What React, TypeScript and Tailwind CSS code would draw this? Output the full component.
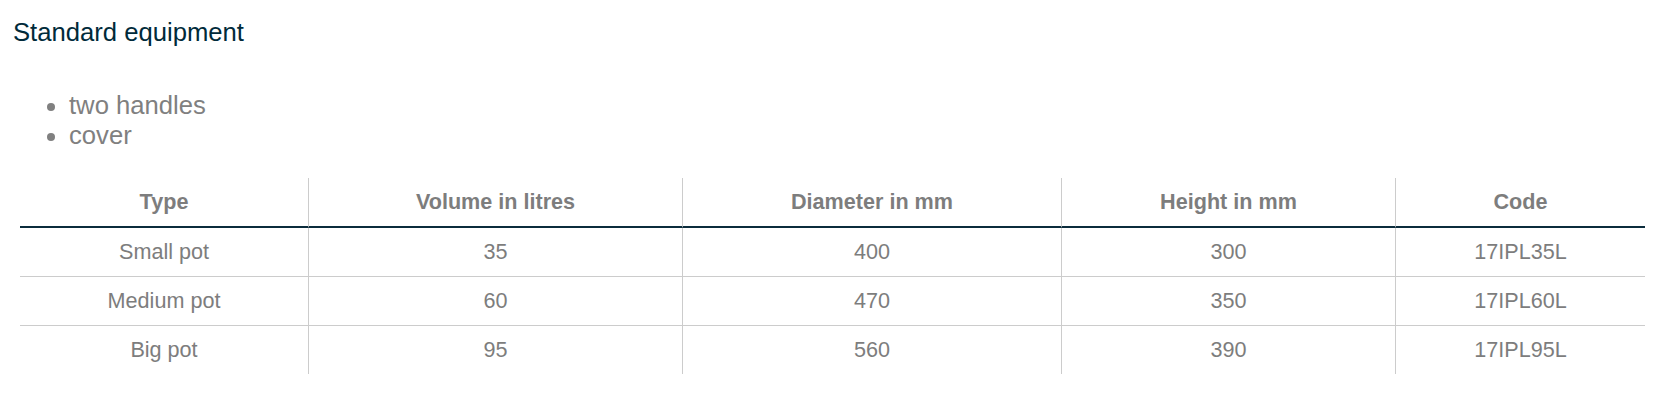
const rows = [
  { type: "Small pot", volume: "35", diameter: "400", height: "300", code: "17IPL35L" },
  { type: "Medium pot", volume: "60", diameter: "470", height: "350", code: "17IPL60L" },
  { type: "Big pot", volume: "95", diameter: "560", height: "390", code: "17IPL95L" },
];

const headers = ["Type", "Volume in litres", "Diameter in mm", "Height in mm", "Code"];

export default function App() {
  return (
    <main className="min-h-[405px] bg-white px-[13px] pt-[18px] font-['Liberation_Sans',Arial,sans-serif]">
      <h2 className="text-[25.65px] leading-[29.5px] font-normal text-[#002a3a]">
        Standard equipment
      </h2>

      <ul className="mt-[43.5px] list-disc pl-[56px] text-[25.65px] leading-[29.5px] text-[#808080]">
        <li>two handles</li>
        <li>cover</li>
      </ul>

      {/* Sizes table */}
      <table className="ml-[7px] mt-[28px] w-[1625px] table-fixed border-separate border-spacing-0 text-center text-[21.6px] text-[#7d7d7d]">
        <colgroup>
          <col className="w-[288px]" />
          <col className="w-[374px]" />
          <col className="w-[379px]" />
          <col className="w-[334px]" />
          <col className="w-[250px]" />
        </colgroup>
        <thead>
          <tr>
            {headers.map((h, i) => (
              <th
                key={h}
                className={`p-0 leading-[48px] font-bold border-b-2 border-b-[#0b2c3c] ${
                  i > 0 ? "border-l border-l-[#cccccc]" : ""
                }`}
              >
                {h}
              </th>
            ))}
          </tr>
        </thead>
        <tbody>
          {rows.map((r, ri) => {
            const cells = [r.type, r.volume, r.diameter, r.height, r.code];
            const last = ri === rows.length - 1;
            return (
              <tr key={r.code}>
                {cells.map((c, i) => (
                  <td
                    key={i}
                    className={`p-0 leading-[48px] font-normal ${
                      last ? "" : "border-b border-b-[#cccccc]"
                    } ${i > 0 ? "border-l border-l-[#cccccc]" : ""}`}
                  >
                    {c}
                  </td>
                ))}
              </tr>
            );
          })}
        </tbody>
      </table>
    </main>
  );
}
